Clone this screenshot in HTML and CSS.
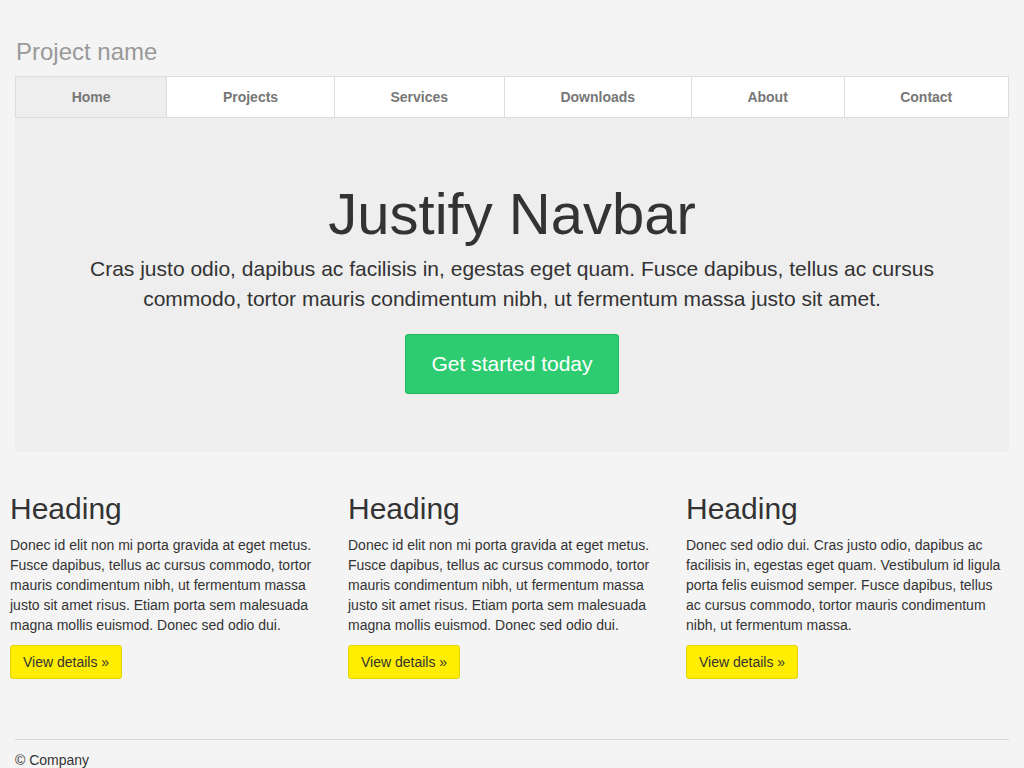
FILE: index.html
```html
<!DOCTYPE html>
<html lang="en">
<head>
<meta charset="utf-8">
<title>Justified Nav</title>
<link rel="stylesheet" href="styles.css">
</head>
<body>
<div class="container">
  <div class="masthead">
    <h3 class="brand">Project name</h3>
    <nav>
      <ul class="nav-justified">
        <li class="active"><a href="#">Home</a></li>
        <li><a href="#">Projects</a></li>
        <li><a href="#">Services</a></li>
        <li><a href="#">Downloads</a></li>
        <li><a href="#">About</a></li>
        <li><a href="#">Contact</a></li>
      </ul>
    </nav>
  </div>
  <div class="jumbotron">
    <h1>Justify Navbar</h1>
    <p class="lead">Cras justo odio, dapibus ac facilisis in, egestas eget quam. Fusce dapibus, tellus ac cursus commodo, tortor mauris condimentum nibh, ut fermentum massa justo sit amet.</p>
    <a class="btn-start" href="#">Get started today</a>
  </div>
</div>
<div class="row">
  <div class="col">
    <h2>Heading</h2>
    <p>Donec id elit non mi porta gravida at eget metus. Fusce dapibus, tellus ac cursus commodo, tortor mauris condimentum nibh, ut fermentum massa justo sit amet risus. Etiam porta sem malesuada magna mollis euismod. Donec sed odio dui.</p>
    <a class="btn-details" href="#">View details &raquo;</a>
  </div>
  <div class="col">
    <h2>Heading</h2>
    <p>Donec id elit non mi porta gravida at eget metus. Fusce dapibus, tellus ac cursus commodo, tortor mauris condimentum nibh, ut fermentum massa justo sit amet risus. Etiam porta sem malesuada magna mollis euismod. Donec sed odio dui.</p>
    <a class="btn-details" href="#">View details &raquo;</a>
  </div>
  <div class="col">
    <h2>Heading</h2>
    <p>Donec sed odio dui. Cras justo odio, dapibus ac facilisis in, egestas eget quam. Vestibulum id ligula porta felis euismod semper. Fusce dapibus, tellus ac cursus commodo, tortor mauris condimentum nibh, ut fermentum massa.</p>
    <a class="btn-details" href="#">View details &raquo;</a>
  </div>
</div>
<div class="container">
  <footer class="footer">
    <p>&copy; Company</p>
  </footer>
</div>
</body>
</html>
```
FILE: styles.css
```css
* { box-sizing: border-box; }
html, body { margin: 0; padding: 0; }
body {
  background: #f4f4f4;
  color: #333;
  font-family: "Liberation Sans", Arial, sans-serif;
  font-size: 14px;
  line-height: 20px;
}
a { text-decoration: none; }
.container { padding: 0 15px; }
.masthead { padding-top: 39px; }
.brand {
  margin: 0 0 11px 1px;
  font-size: 24px;
  line-height: 1.1;
  font-weight: normal;
  color: #999;
}
.nav-justified {
  display: flex;
  margin: 0;
  padding: 0;
  list-style: none;
  border: 1px solid #ddd;
  background: #fff;
}
.nav-justified li {
  flex: 1 1 auto;
  text-align: center;
}
.nav-justified li + li { border-left: 1px solid #ddd; }
.nav-justified li a {
  display: block;
  padding: 10px 15px;
  color: #777;
  font-weight: bold;
  line-height: 20px;
}
.nav-justified li.active { background: #eee; }
.jumbotron {
  background: #eee;
  text-align: center;
  padding: 64px 60px 58px;
}
.jumbotron h1 {
  margin: 0 0 8px;
  font-size: 58px;
  line-height: 1.1;
  font-weight: normal;
}
.lead {
  margin: 0 0 21px;
  font-size: 21px;
  line-height: 1.4;
}
.btn-start {
  display: inline-block;
  padding: 15px 25px;
  font-size: 21px;
  line-height: 28px;
  color: #fff;
  background: #2ecc71;
  border: 1px solid #28b463;
  border-radius: 3px;
}
.row {
  display: grid;
  grid-template-columns: repeat(3, 338px);
  padding-top: 40px;
}
.col { padding: 0 10px; }
.col h2 {
  margin: 0 0 10px;
  font-size: 30px;
  line-height: 1.1;
  font-weight: normal;
}
.col p { margin: 0 0 10px; }
.btn-details {
  display: inline-block;
  padding: 6px 12px;
  color: #333;
  background: #ffee00;
  border: 1px solid #e3d300;
  border-radius: 3px;
}
.footer {
  margin-top: 60px;
  border-top: 1px solid #d8d8d8;
  padding-top: 10px;
}
.footer p { margin: 0 0 20px; }
```
